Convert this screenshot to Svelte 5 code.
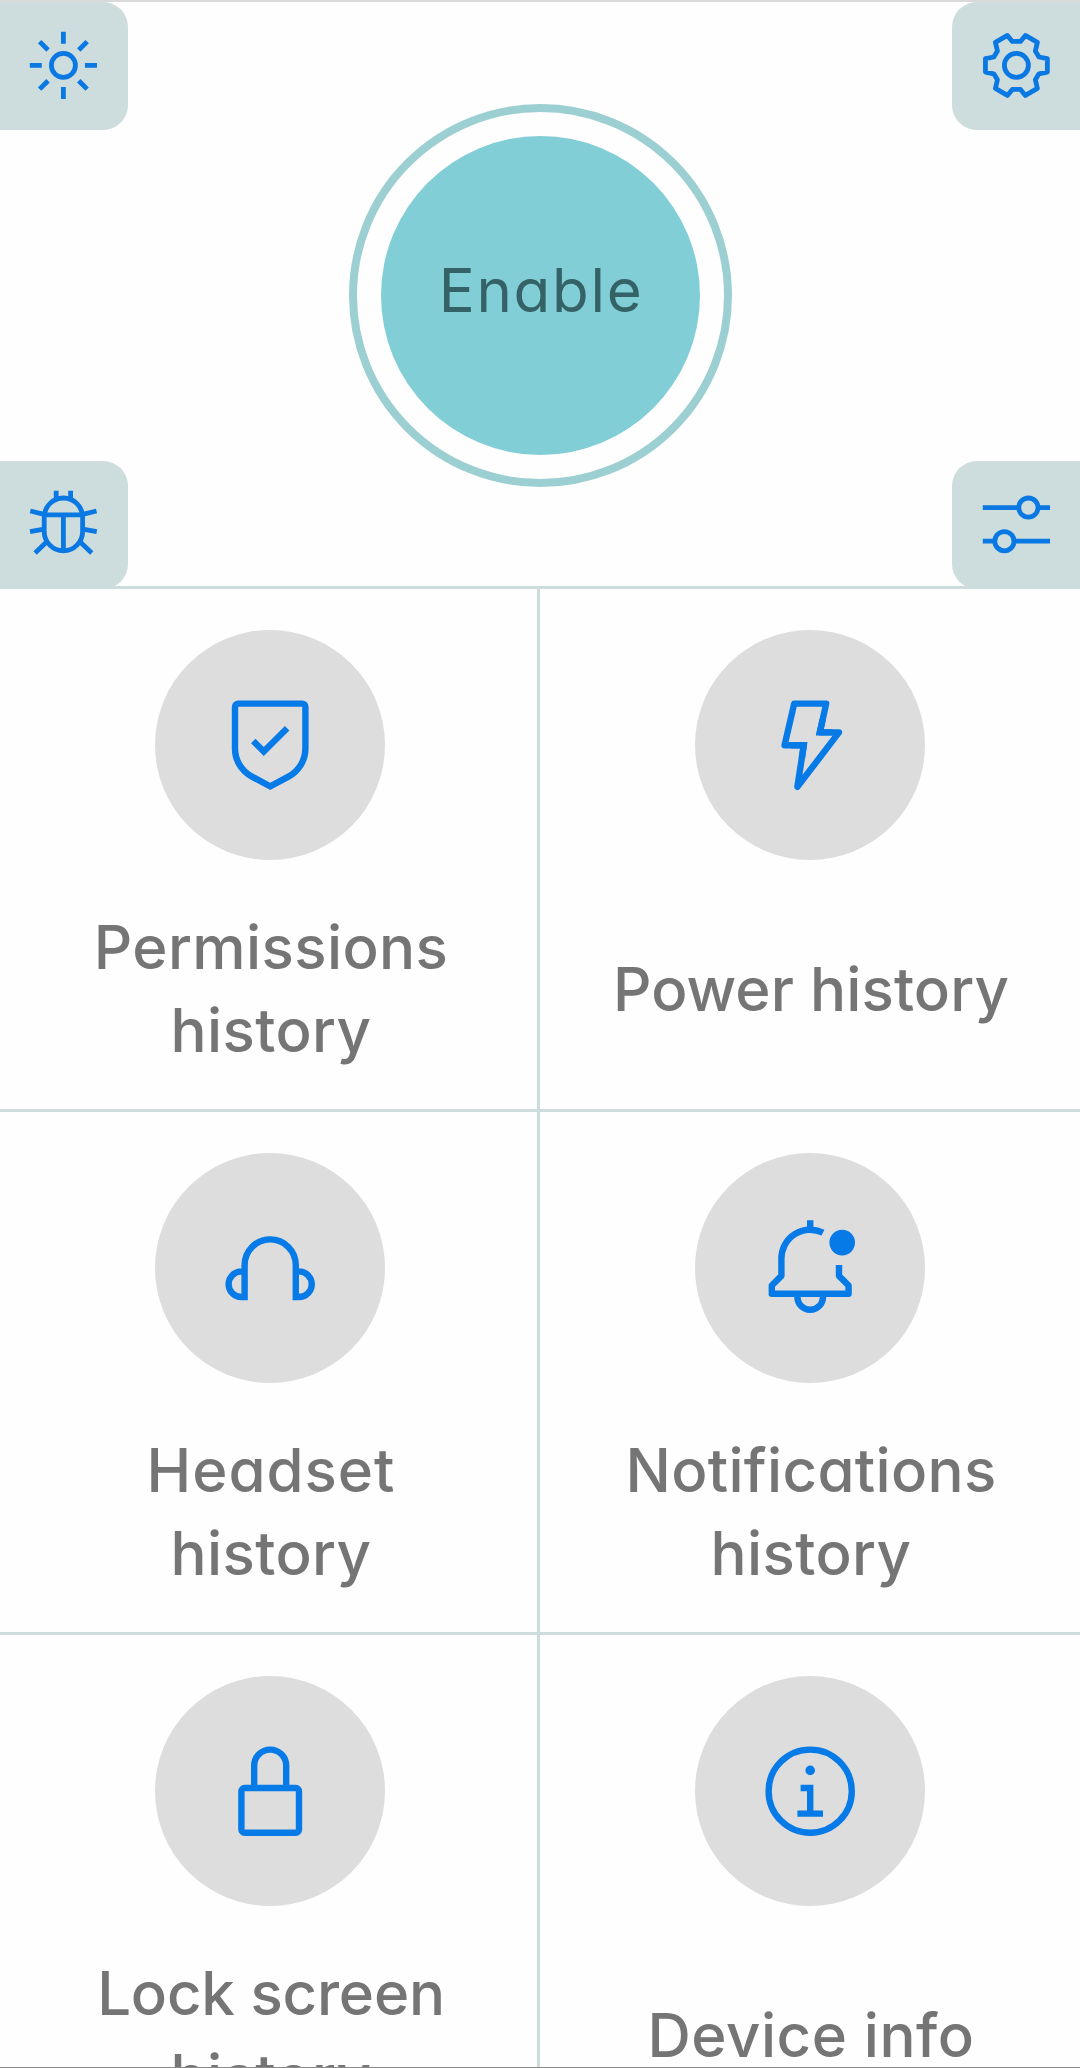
<script lang="ts">
  type Item = { icon: string; lines: { text: string; spacing: number }[] };

  const corners = [
    { name: 'light', label: 'Theme', side: 'left', edge: 'top' },
    { name: 'settings', label: 'Settings', side: 'right', edge: 'top' },
    { name: 'debug', label: 'Debug', side: 'left', edge: 'bottom' },
    { name: 'adjust', label: 'Adjust', side: 'right', edge: 'bottom' },
  ];

  const history = { text: 'history', spacing: 0.4 };

  const items: Item[] = [
    { icon: 'security', lines: [{ text: 'Permissions', spacing: 0.4 }, history] },
    { icon: 'flash', lines: [{ text: 'Power history', spacing: 0.1 }] },
    { icon: 'headset', lines: [{ text: 'Headset', spacing: 1 }, history] },
    { icon: 'notification', lines: [{ text: 'Notifications', spacing: 0.3 }, history] },
    { icon: 'locked', lines: [{ text: 'Lock screen', spacing: -0.2 }, history] },
    { icon: 'info', lines: [{ text: 'Device info', spacing: 0.5 }] },
  ];
</script>

{#snippet icon(name: string)}
  <svg class="icon" viewBox="0 0 32 32" aria-hidden="true">
    {#if name === 'light'}
      <circle cx="16" cy="16" r="5" />
      <path d="M16 2v5M16 25v5M2 16h5M25 16h5M6.1 6.1l3.5 3.5M22.4 22.4l3.5 3.5M6.1 25.9l3.5-3.5M22.4 9.6l3.5-3.5" />
    {:else if name === 'settings'}
      <circle cx="16" cy="16" r="5" />
      <path
        class="round"
        d="M14.3 6h3.4l2.05-2.5 5 2.9L23.9 10l1.5 2.5 3.5.7v5.6l-3.5.7-1.5 2.5.85 3.6-5 2.9L17.7 26h-3.4l-2.05 2.5-5-2.9L8.1 22l-1.5-2.5-3.5-.7v-5.6l3.5-.7L8.1 10l-.85-3.6 5-2.9z"
      />
    {:else if name === 'debug'}
      <path d="M8 13a8 8 0 0 1 16 0v6a8 8 0 0 1-16 0zM8 12h16M16 12v15M13 2v4M19 2v4" />
      <path d="M2.2 10.4 8 11.8M29.8 10.4 24 11.8M2.1 19 8 18M29.9 19 24 18M4.2 27.9 9.3 23M27.8 27.9 22.7 23" />
    {:else if name === 'adjust'}
      <circle cx="21" cy="9" r="4" />
      <circle cx="11" cy="23" r="4" />
      <path d="M2 9h15M25 9h5M2 23h5M15 23h15" />
    {:else if name === 'security'}
      <path
        class="solid"
        d="M16 30l-6.176-3.293A10.982 10.982 0 0 1 4 17V4a2 2 0 0 1 2-2h20a2 2 0 0 1 2 2v13a10.982 10.982 0 0 1-5.824 9.707zM6 4v13a8.985 8.985 0 0 0 4.766 7.942L16 27.733l5.234-2.79A8.985 8.985 0 0 0 26 17V4z"
      />
      <path d="M10.7 14.7 14 18l7.3-7.3" />
    {:else if name === 'flash'}
      <path class="round" d="M11 3h10l-2 9h6L12 29l2-13H8z" />
      <path d="M19.9 8 19 12h4M10 16h4l-.6 4" />
    {:else if name === 'headset'}
      <path d="M8 26V15a8 8 0 0 1 16 0v11M8 17H7a4 4 0 0 0 0 8h1M24 17h1a4 4 0 0 1 0 8h-1" />
    {:else if name === 'notification'}
      <path class="round" d="M20 4.9A9 9 0 0 0 7 13v5.4l-3 3V24h24v-2.6l-3-3V15" />
      <path d="M16 1v3M12 25a4 4 0 0 0 8 0" />
      <circle class="solid" cx="26" cy="8" r="4" />
    {:else if name === 'locked'}
      <rect x="7" y="15" width="18" height="14" rx="1" />
      <path d="M11 15V8a5 5 0 0 1 10 0v7" />
    {:else if name === 'info'}
      <circle cx="16" cy="16" r="13" />
      <circle class="solid" cx="16" cy="9.5" r="1.5" />
      <path class="solid" d="M17 22v-8h-4v2h2v6h-3v2h8v-2z" />
    {/if}
  </svg>
{/snippet}

<main class="screen">
  <header class="hero">
    {#each corners as c (c.name)}
      <button class="corner {c.side} {c.edge}" aria-label={c.label}>{@render icon(c.name)}</button>
    {/each}
    <div class="ring">
      <button class="enable">Enable</button>
    </div>
  </header>

  <section class="grid">
    {#each items as item (item.icon)}
      <div class="cell">
        <div class="disc">{@render icon(item.icon)}</div>
        <div class="label">
          {#each item.lines as line}
            <span style="letter-spacing: {line.spacing}px">{line.text}</span>
          {/each}
        </div>
      </div>
    {/each}
  </section>
</main>

<style>
  :global(body) {
    background: #fefefe;
    overflow: hidden;
  }

  .screen {
    box-sizing: border-box;
    height: 2068px;
    overflow: hidden;
    border-top: 2px solid #d9d9d9;
    border-bottom: 1px solid #8a8a8a;
    background: #fefefe;
    font-family: Inter, "Open Sans", sans-serif;
    font-feature-settings: "cv11";
  }

  button {
    border: 0;
    padding: 0;
    font: inherit;
    font-feature-settings: inherit;
  }

  .icon {
    display: block;
    fill: none;
    stroke: currentColor;
    stroke-width: 2;
  }

  .icon .round {
    stroke-linejoin: round;
  }

  .icon .solid {
    fill: currentColor;
    stroke: none;
  }

  .hero {
    position: relative;
    box-sizing: border-box;
    display: flex;
    align-items: center;
    justify-content: center;
    height: 587px;
    border-bottom: 3px solid #cddcdc;
  }

  .corner {
    position: absolute;
    display: flex;
    align-items: center;
    justify-content: center;
    width: 128px;
    height: 128px;
    padding-bottom: 1px;
    background: #cddcdc;
    color: #0a78e2;
  }

  .corner .icon {
    width: 76.8px;
    height: 76.8px;
  }

  .corner.left {
    left: 0;
    padding-right: 1px;
    border-radius: 0 25px 25px 0;
  }

  .corner.right {
    right: 0;
    border-radius: 25px 0 0 25px;
  }

  .corner.top {
    top: 0;
  }

  .corner.bottom {
    bottom: -3px;
  }

  .ring {
    box-sizing: border-box;
    width: 383px;
    height: 383px;
    margin-top: 3px;
    padding: 24px;
    border: 8px solid #9ccfd1;
    border-radius: 50%;
  }

  .enable {
    width: 100%;
    height: 100%;
    padding-bottom: 12px;
    padding-left: 2px;
    border-radius: 50%;
    background: #81ced7;
    color: #346266;
    font-size: 60px;
    letter-spacing: 1.7px;
  }

  .grid {
    display: grid;
    grid-template-columns: 1fr 1fr;
    grid-auto-rows: 523px;
  }

  .cell {
    box-sizing: border-box;
    display: flex;
    flex-direction: column;
    align-items: center;
    padding-top: 41px;
    border-bottom: 3px solid #cddcdc;
  }

  .cell:nth-child(odd) {
    box-shadow: inset -3px 0 #cddcdc;
  }

  .disc {
    display: flex;
    flex: none;
    align-items: center;
    justify-content: center;
    width: 230px;
    height: 230px;
    border-radius: 50%;
    background: #ddd;
    color: #067ae6;
  }

  .disc .icon {
    width: 102.4px;
    height: 102.4px;
  }

  .label {
    display: flex;
    flex: 1;
    flex-direction: column;
    align-items: center;
    justify-content: center;
    padding: 9px 0 0 2px;
    color: #757575;
    font-size: 60px;
    font-weight: 500;
    line-height: 83px;
    white-space: nowrap;
  }
</style>
